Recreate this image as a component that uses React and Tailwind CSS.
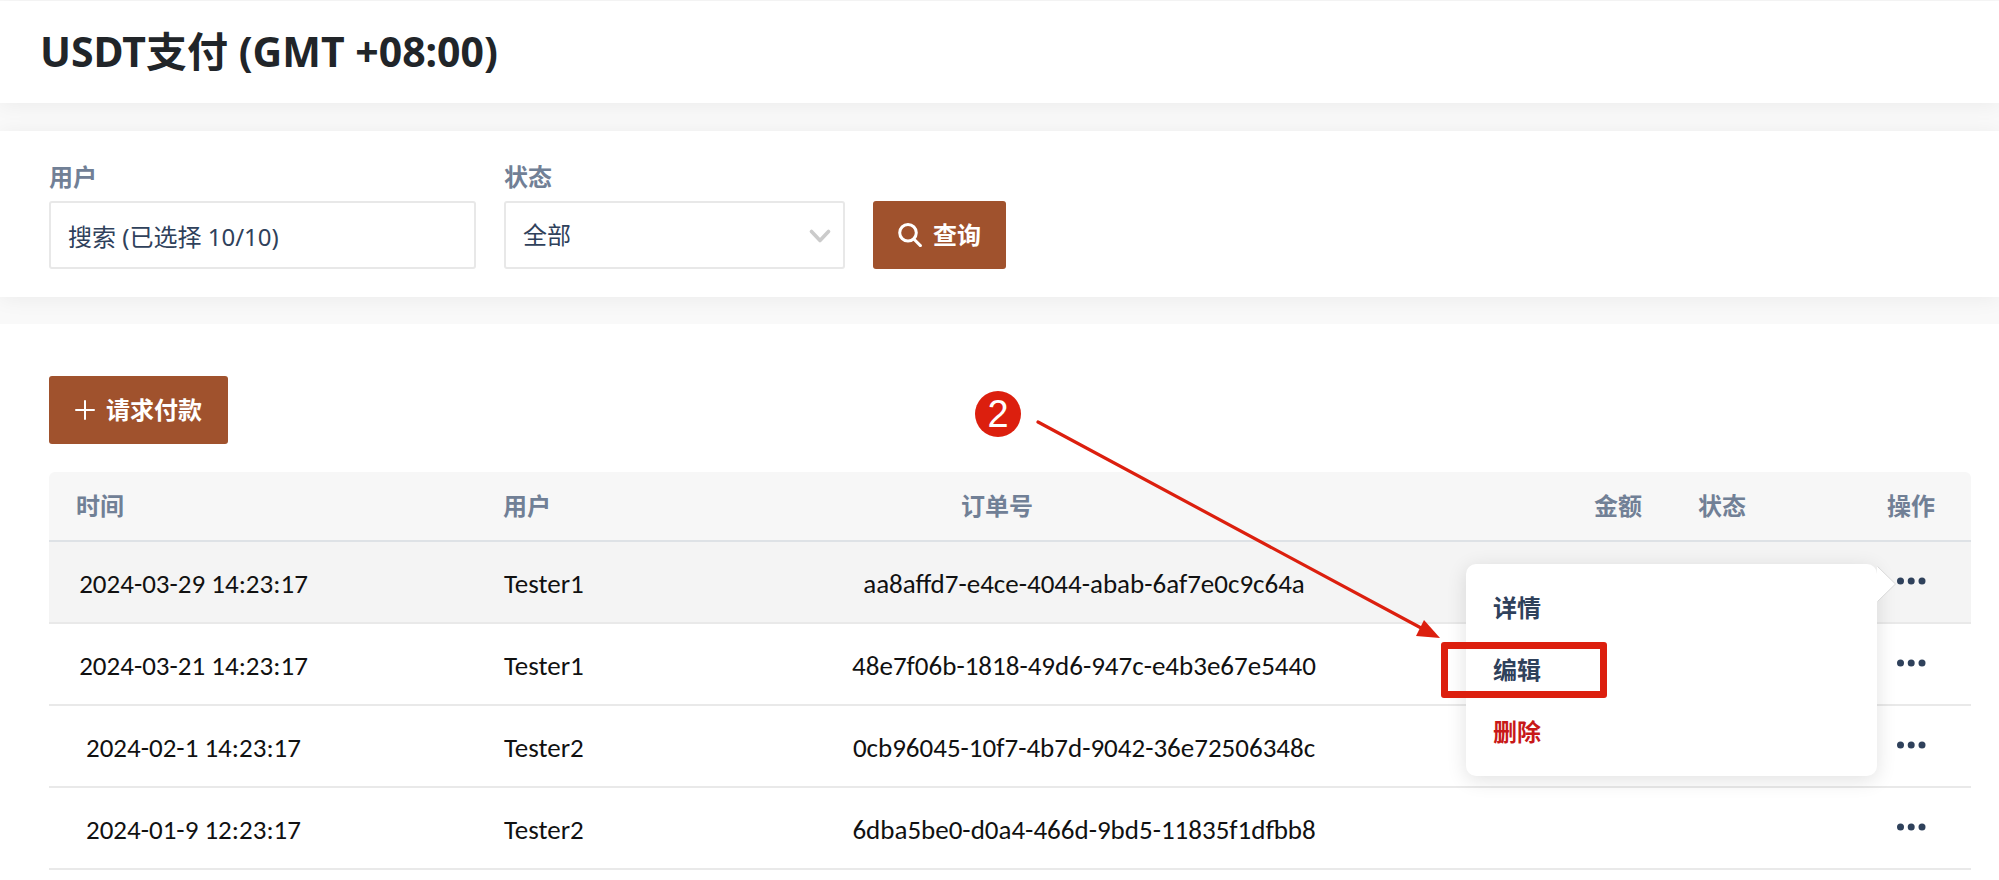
const rows = [
  { time: "2024-03-29 14:23:17", user: "Tester1", order: "aa8affd7-e4ce-4044-abab-6af7e0c9c64a", open: true },
  { time: "2024-03-21 14:23:17", user: "Tester1", order: "48e7f06b-1818-49d6-947c-e4b3e67e5440" },
  { time: "2024-02-1 14:23:17", user: "Tester2", order: "0cb96045-10f7-4b7d-9042-36e72506348c" },
  { time: "2024-01-9 12:23:17", user: "Tester2", order: "6dba5be0-d0a4-466d-9bd5-11835f1dfbb8" },
];

function Dots() {
  return (
    <svg viewBox="0 0 30 8" className="h-2 w-[30px]" fill="currentColor" aria-hidden="true">
      <circle cx="4.5" cy="4" r="3.5" />
      <circle cx="15.2" cy="4" r="3.5" />
      <circle cx="26" cy="4" r="3.5" />
    </svg>
  );
}

function SearchIcon() {
  return (
    <svg viewBox="0 0 24 24" className="size-6" fill="none" stroke="currentColor" strokeWidth="3" strokeLinecap="round" aria-hidden="true">
      <circle cx="10" cy="9.8" r="8.3" />
      <path d="M16 16.2 22.4 22.6" />
    </svg>
  );
}

function PlusIcon() {
  return (
    <svg viewBox="0 0 20 20" className="size-5" fill="none" stroke="currentColor" strokeWidth="2" strokeLinecap="round" aria-hidden="true">
      <path d="M10 1v18M1 10h18" />
    </svg>
  );
}

function RowMenu() {
  return (
    <div className="absolute top-[-13px] right-[94px] z-10 w-[411px] rounded-[10px] bg-white py-[13px] text-left shadow-[0_4px_20px_rgba(0,0,0,0.12)]">
      <svg viewBox="0 0 20 38" className="absolute top-[1px] left-full h-[38px] w-5" aria-hidden="true">
        <path d="M0 1 18.5 19 0 37Z" fill="#fff" />
        <path d="M0.5 1.5 18.5 19 0.5 36.5" fill="none" stroke="#d9d9d9" strokeWidth="1" />
      </svg>
      <ul className="text-2xl font-bold text-[#2f415b]">
        <li className="flex h-[62px] items-center px-[27px]">
          <button type="button">详情</button>
        </li>
        <li className="relative flex h-[62px] items-center px-[27px]">
          <button type="button">编辑</button>
          <span className="absolute top-[3px] left-[-25px] h-14 w-[166px] rounded-[3px] border-[7px] border-[#dc1f0e]" />
        </li>
        <li className="flex h-[62px] items-center px-[27px]">
          <button type="button" className="text-[#c81818]">删除</button>
        </li>
      </ul>
      <div className="pointer-events-none absolute top-[-173px] left-[-491px]">
        <span className="flex size-[46px] items-center justify-center rounded-full bg-[#dc1f0e] font-['Liberation_Sans',sans-serif] text-[38px] leading-none text-white">2</span>
        <svg viewBox="0 0 466 248" className="absolute top-0 left-0 h-[248px] w-[466px]" aria-hidden="true">
          <path d="M63 31 448 238" stroke="#dc1f0e" strokeWidth="3.2" strokeLinecap="round" />
          <path d="M465 247 449 229 441 245Z" fill="#dc1f0e" />
        </svg>
      </div>
    </div>
  );
}

export default function App() {
  return (
    <div className="min-h-screen bg-[#f9f9f9] pt-px font-['Noto_Sans','Noto_Sans_CJK_SC',sans-serif] text-[#2f415b]">
      <header className="mb-7 flex h-[102px] items-center bg-white px-10 shadow-[0_2px_20px_rgba(0,0,0,0.06)]">
        <h1 className="text-[41px] font-bold text-[#212529]">USDT支付 (GMT +08:00)</h1>
      </header>

      <form className="relative mb-[27px] flex items-end gap-7 bg-white px-[49px] py-7 shadow-[0_2px_20px_rgba(0,0,0,0.06)]">
        <div className="w-[427px]">
          <label htmlFor="user" className="mb-1.5 block text-2xl leading-9 font-bold text-[#718096]">用户</label>
          <input id="user" type="text" defaultValue="搜索 (已选择 10/10)" className="h-[68px] w-full rounded-[3px] border-2 border-[#e8e8e8] bg-white px-[17px] text-2xl outline-none" />
        </div>
        <div className="w-[341px]">
          <label htmlFor="status" className="mb-1.5 block text-2xl leading-9 font-bold text-[#718096]">状态</label>
          <div className="relative">
            <select id="status" className="h-[68px] w-full appearance-none rounded-[3px] border-2 border-[#e8e8e8] bg-white px-[17px] text-2xl outline-none">
              <option>全部</option>
            </select>
            <svg viewBox="0 0 22 14" className="pointer-events-none absolute top-7 right-[14px] h-[14px] w-[22px]" fill="none" stroke="#cbcbcb" strokeWidth="3.6" strokeLinecap="round" strokeLinejoin="round" aria-hidden="true">
              <path d="M2.5 2.5 11 11.5 19.5 2.5" />
            </svg>
          </div>
        </div>
        <button type="button" className="flex h-[68px] items-center gap-[11px] rounded-[3px] bg-[#a0522d] px-[25px] text-2xl font-bold text-white">
          <SearchIcon />
          查询
        </button>
      </form>

      <main className="relative bg-white pt-[52px] pr-7 pb-[10px] pl-[49px]">
        <button type="button" className="mb-7 flex h-[68px] items-center gap-[11px] rounded-[3px] bg-[#a0522d] px-[26px] text-2xl font-bold text-white">
          <PlusIcon />
          请求付款
        </button>
        <table className="w-full table-fixed border-separate border-spacing-0">
          <colgroup>
            <col className="w-[427px]" />
            <col className="w-[364px]" />
            <col />
            <col className="w-[343px]" />
            <col className="w-[180px]" />
            <col className="w-[120px]" />
          </colgroup>
          <thead className="text-left text-2xl text-[#718096]">
            <tr className="h-[70px] [&>th]:border-b-2 [&>th]:border-[#dee2e6] [&>th]:bg-[#f7f7f7] [&>th]:font-bold">
              <th scope="col" className="rounded-tl-md pl-[27px]">时间</th>
              <th scope="col" className="pl-[27px]">用户</th>
              <th scope="col" className="pl-[121px]">订单号</th>
              <th scope="col" className="pr-[29px] text-right">金额</th>
              <th scope="col" className="pl-[27px]">状态</th>
              <th scope="col" className="rounded-tr-md text-center">操作</th>
            </tr>
          </thead>
          <tbody className="font-['Carlito','Lato',sans-serif] text-[27px] text-[#111]">
            {rows.map((row) => (
              <tr key={row.order} className={row.open ? "h-[82px] bg-[#f4f4f4] [&>td]:border-b-2 [&>td]:border-[#e9e9e9]" : "h-[82px] [&>td]:border-b-2 [&>td]:border-[#e9e9e9]"}>
                <td className="pt-1 pr-[138px] text-center">{row.time}</td>
                <td className="pt-1 pl-7">{row.user}</td>
                <td className="pt-1 text-center">{row.order}</td>
                <td />
                <td />
                <td className="pb-[3px] font-['Noto_Sans','Noto_Sans_CJK_SC',sans-serif] text-[#2f415b]">
                  <div className="relative flex justify-center">
                    <button type="button" aria-label="操作" className="flex"><Dots /></button>
                    {row.open && <RowMenu />}
                  </div>
                </td>
              </tr>
            ))}
          </tbody>
        </table>
      </main>
    </div>
  );
}
